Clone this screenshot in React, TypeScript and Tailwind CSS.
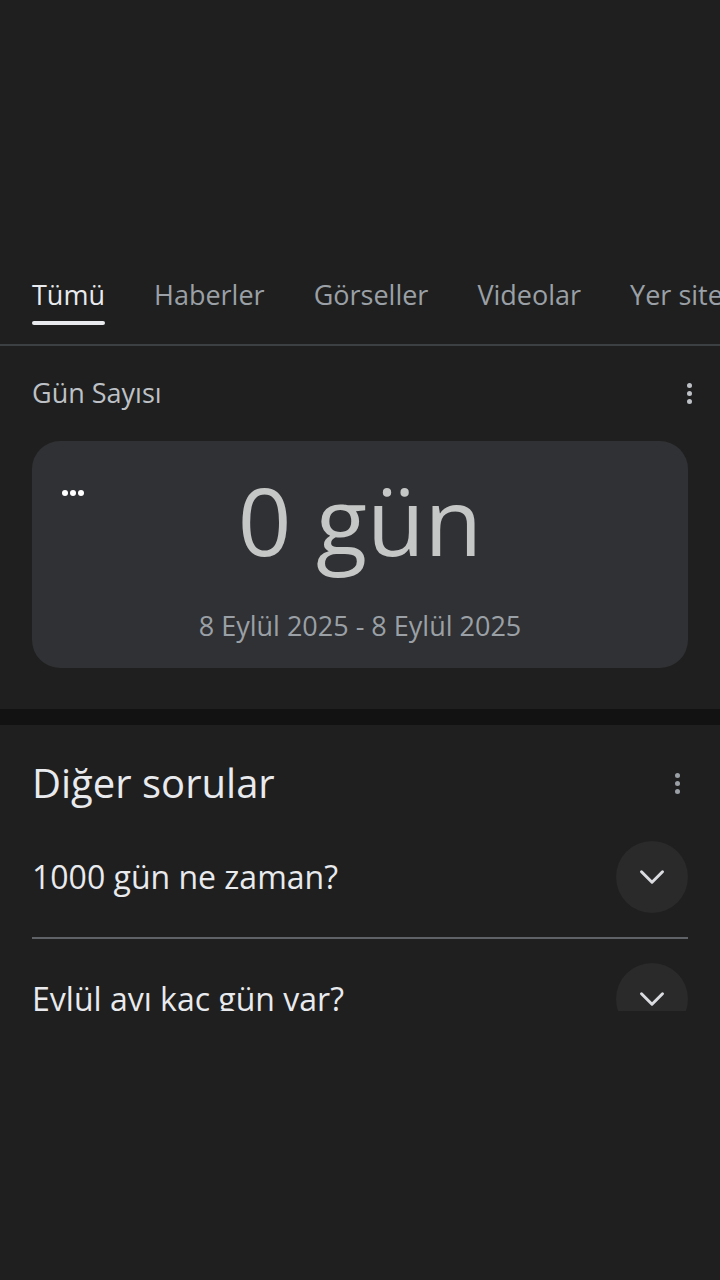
import { ChevronDown } from 'lucide-react';

const tabs = ['Tümü', 'Haberler', 'Görseller', 'Videolar', 'Yer siteleri'];

function Kebab({ className }: { className: string }) {
	return (
		<div className={`flex flex-col items-center gap-[3px] ${className}`}>
			<span className="block w-[5px] h-[5px] rounded-full bg-current" />
			<span className="block w-[5px] h-[5px] rounded-full bg-current" />
			<span className="block w-[5px] h-[5px] rounded-full bg-current" />
		</div>
	);
}

function Question({ text }: { text: string }) {
	return (
		<div className="flex items-center justify-between h-[120px]">
			<span className="text-[32px] text-[#e8eaed] leading-none">{text}</span>
			<div className="w-[72px] h-[72px] rounded-full bg-[#2a2a2b] flex items-center justify-center">
				<ChevronDown className="w-[42px] h-[42px] text-[#dadce0]" strokeWidth={1.7} />
			</div>
		</div>
	);
}

export default function App() {
	return (
		<div className="w-[720px] h-[1280px] bg-[#1f1f1f] overflow-hidden" style={{ fontFamily: '"Open Sans", Roboto, sans-serif' }}>
			<div className="h-[260px]" />

			{/* tabs */}
			<div className="flex gap-[49px] pl-[32px] whitespace-nowrap overflow-hidden h-[86px] border-b-2 border-[#3c4043]">
				{tabs.map((t, i) => (
					<div key={t} className="flex flex-col pt-[18px]">
						<span className={`text-[27px] leading-[34px] ${i === 0 ? 'text-[#e8eaed]' : 'text-[#9aa0a6]'}`}>{t}</span>
						{i === 0 && <span className="block h-[4px] mt-[9px] rounded-sm bg-[#e8eaed]" />}
					</div>
				))}
			</div>

			{/* Gün Sayısı */}
			<div className="px-[32px] pt-[29px] pb-[41px]">
				<div className="flex items-center justify-between h-[36px]">
					<span className="text-[27px] text-[#bdc1c6]">Gün Sayısı</span>
					<Kebab className="text-[#bdc1c6] mr-[-4px]" />
				</div>
				<div className="mt-[30px] h-[227px] rounded-[28px] bg-[#303134] flex flex-col items-center relative">
					<div className="absolute left-[30px] top-[49px] flex gap-[2px]">
						<span className="block w-[6px] h-[6px] rounded-full bg-white" />
						<span className="block w-[6px] h-[6px] rounded-full bg-white" />
						<span className="block w-[6px] h-[6px] rounded-full bg-white" />
					</div>
					<div className="mt-[24px] text-[94px] leading-[110px] text-[#c4c7c5] font-normal">0 gün</div>
					<div className="mt-[36px] text-[27px] leading-[30px] text-[#9aa0a6]">8 Eylül 2025 - 8 Eylül 2025</div>
				</div>
			</div>

			<div className="h-[16px] bg-[#121212]" />

			{/* Diğer sorular */}
			<div className="px-[32px] h-[286px] overflow-hidden">
				<div className="flex items-center justify-between pt-[24px] h-[92px]">
					<span className="text-[40px] text-[#e8eaed] leading-none">Diğer sorular</span>
					<Kebab className="text-[#9aa0a6] mr-[8px]" />
				</div>
				<Question text="1000 gün ne zaman?" />
				<div className="h-[2px] bg-[#5f6368]" />
				<Question text="Eylül ayı kaç gün var?" />
			</div>
		</div>
	);
}
